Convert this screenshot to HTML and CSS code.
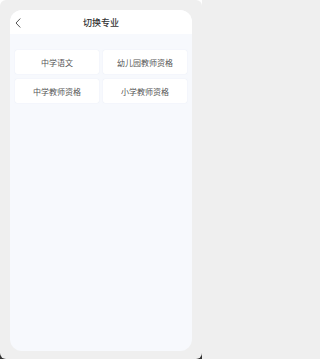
FILE: index.html
```html
<!DOCTYPE html>
<html lang="zh">
<head>
<meta charset="utf-8">
<title>切换专业</title>
<link rel="stylesheet" href="styles.css">
</head>
<body>
<div class="frame">
  <div class="panel">
    <div class="header">
      <span class="back">
        <svg width="6" height="10" viewBox="0 0 6 10"><path d="M5 0.8 L1 5 L5 9.2" fill="none" stroke="#555" stroke-width="1" stroke-linecap="round" stroke-linejoin="round"/></svg>
      </span>
      <span class="title">切换专业</span>
    </div>
    <div class="body">
      <div class="grid">
        <div class="item">中学语文</div>
        <div class="item">幼儿园教师资格</div>
        <div class="item">中学教师资格</div>
        <div class="item">小学教师资格</div>
      </div>
    </div>
  </div>
</div>
</body>
</html>
```
FILE: styles.css
```css
html {
  margin: 0;
  padding: 0;
  background: #efefef;
}
body {
  margin: 0;
  padding: 0;
  width: 202px;
  height: 359px;
  overflow: hidden;
  background: linear-gradient(#ffffff 0, #ffffff 50%, #333 50%, #333 100%);
  font-family: "Noto Sans CJK SC", "Noto Sans", sans-serif;
}
.frame {
  box-sizing: border-box;
  width: 202px;
  height: 359px;
  background: #efefef;
  border-radius: 6px;
  padding: 10px 10px 8px 10px;
  display: flex;
}
.panel {
  flex: 1;
  display: flex;
  flex-direction: column;
  background: #f7f9fd;
  border-radius: 12px;
  overflow: hidden;
}
.header {
  position: relative;
  height: 24px;
  background: #ffffff;
  display: flex;
  align-items: center;
  justify-content: center;
}
.back {
  position: absolute;
  left: 5px;
  top: 8px;
  display: flex;
}
.title {
  font-size: 9px;
  font-weight: 500;
  color: #333;
  line-height: 1;
}
.body {
  flex: 1;
  padding: 16px 5px 0 5px;
}
.grid {
  display: grid;
  grid-template-columns: 84px 84px;
  column-gap: 4px;
  row-gap: 5px;
}
.item {
  height: 24px;
  background: #ffffff;
  border-radius: 2px;
  box-shadow: 0 0 1px rgba(200, 210, 230, 0.6);
  display: flex;
  align-items: center;
  justify-content: center;
  font-size: 8px;
  color: #555;
}
```
